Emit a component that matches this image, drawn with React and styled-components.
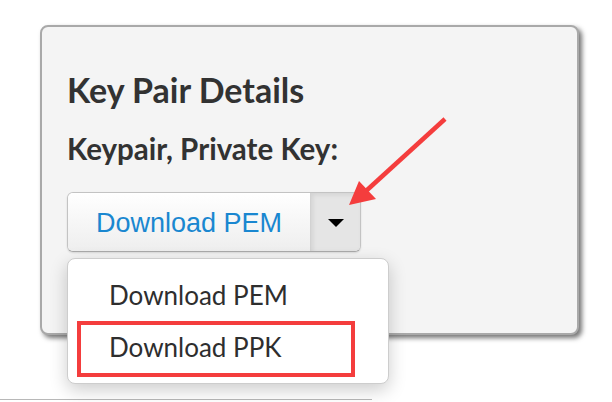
import React from 'react'
import styled, { createGlobalStyle } from 'styled-components'

const GlobalStyle = createGlobalStyle`
  html, body {
    margin: 0;
    padding: 0;
    background: #ffffff;
  }
  body {
    font-family: Lato, "Noto Sans", sans-serif;
    overflow: hidden;
  }
`

const items = [
  { label: 'Download PEM' },
  { label: 'Download PPK', highlight: true },
]

function App() {
  return (
    <>
      <GlobalStyle />
      <Page>
        <Panel>
          <Title>Key Pair Details</Title>
          <Label>Keypair, Private Key:</Label>
          <SplitGroup>
            <MainButton>Download PEM</MainButton>
            <CaretButton>
              <Caret />
            </CaretButton>
            <Menu>
              {items.map((item) => (
                <MenuItem key={item.label} $highlight={item.highlight}>
                  {item.label}
                </MenuItem>
              ))}
            </Menu>
          </SplitGroup>
        </Panel>
        <BottomRule />
        <Arrow viewBox="0 0 115 100" width="115" height="100">
          <line x1="105" y1="9" x2="26" y2="81" stroke="#f43d3d" strokeWidth="4.5" />
          <polygon points="9,95 19,71 36,89" fill="#f43d3d" />
        </Arrow>
      </Page>
    </>
  )
}

export default App

const Page = styled.div`
  position: relative;
  width: 612px;
  height: 402px;
  padding: 25px 0 0 40px;
  box-sizing: border-box;
`

const Panel = styled.div`
  width: 539px;
  height: 310px;
  box-sizing: border-box;
  background: #f4f4f4;
  border: 2px solid #a9a9a9;
  border-radius: 8px;
  box-shadow: 3px 3px 5px rgba(0, 0, 0, 0.55);
  padding: 46px 24px 0 25px;
`

const Title = styled.h2`
  margin: 0;
  font-size: 34px;
  line-height: 1;
  font-weight: 700;
  color: #323232;
`

const Label = styled.h3`
  margin: 27px 0 0;
  font-size: 29.5px;
  line-height: 1;
  font-weight: 700;
  color: #323232;
`

const SplitGroup = styled.div`
  position: relative;
  display: inline-flex;
  margin-top: 28px;
  height: 58px;
  border: 1px solid #c3c3c3;
  border-bottom-color: #a9a9a9;
  border-radius: 6px;
  box-shadow: 0 1px 2px rgba(0, 0, 0, 0.12);
`

const MainButton = styled.button`
  width: 243px;
  height: 100%;
  display: flex;
  align-items: center;
  justify-content: center;
  padding: 3px 0 0;
  border: none;
  border-right: 1px solid #d2d2d2;
  border-radius: 5px 0 0 5px;
  background: linear-gradient(#ffffff, #eeeeee);
  font-family: "Liberation Sans", Arial, sans-serif;
  font-size: 27px;
  color: #1a87d0;
`

const CaretButton = styled.button`
  width: 49px;
  height: 100%;
  display: flex;
  align-items: center;
  justify-content: center;
  padding: 0;
  border: none;
  border-radius: 0 5px 5px 0;
  background: #e5e5e5;
  box-shadow: inset 2px 2px 4px rgba(0, 0, 0, 0.08);
`

const Caret = styled.span`
  width: 0;
  height: 0;
  margin-top: 2px;
  border-left: 8px solid transparent;
  border-right: 8px solid transparent;
  border-top: 8px solid #000;
`

const Menu = styled.ul`
  position: absolute;
  top: calc(100% + 7px);
  left: -1px;
  width: 322px;
  box-sizing: border-box;
  margin: 0;
  padding: 10px 0;
  list-style: none;
  background: #ffffff;
  border: 1px solid #cdcdcd;
  border-radius: 8px;
  box-shadow: 0 6px 18px rgba(0, 0, 0, 0.2);
  z-index: 2;
`

const MenuItem = styled.li`
  position: relative;
  height: 52px;
  line-height: 52px;
  padding-left: 41px;
  font-size: 26px;
  color: #2e2e2e;

  ${(p) =>
    p.$highlight &&
    `
    &::after {
      content: '';
      position: absolute;
      left: 9px;
      top: 0;
      width: 278px;
      height: 56px;
      box-sizing: border-box;
      border: 4px solid #f43d3d;
    }
  `}
`

const BottomRule = styled.div`
  margin-top: 64px;
  margin-left: -40px;
  width: 372px;
  height: 1px;
  background: #b8b8b8;
`

const Arrow = styled.svg`
  position: absolute;
  left: 340px;
  top: 110px;
  z-index: 3;
`
